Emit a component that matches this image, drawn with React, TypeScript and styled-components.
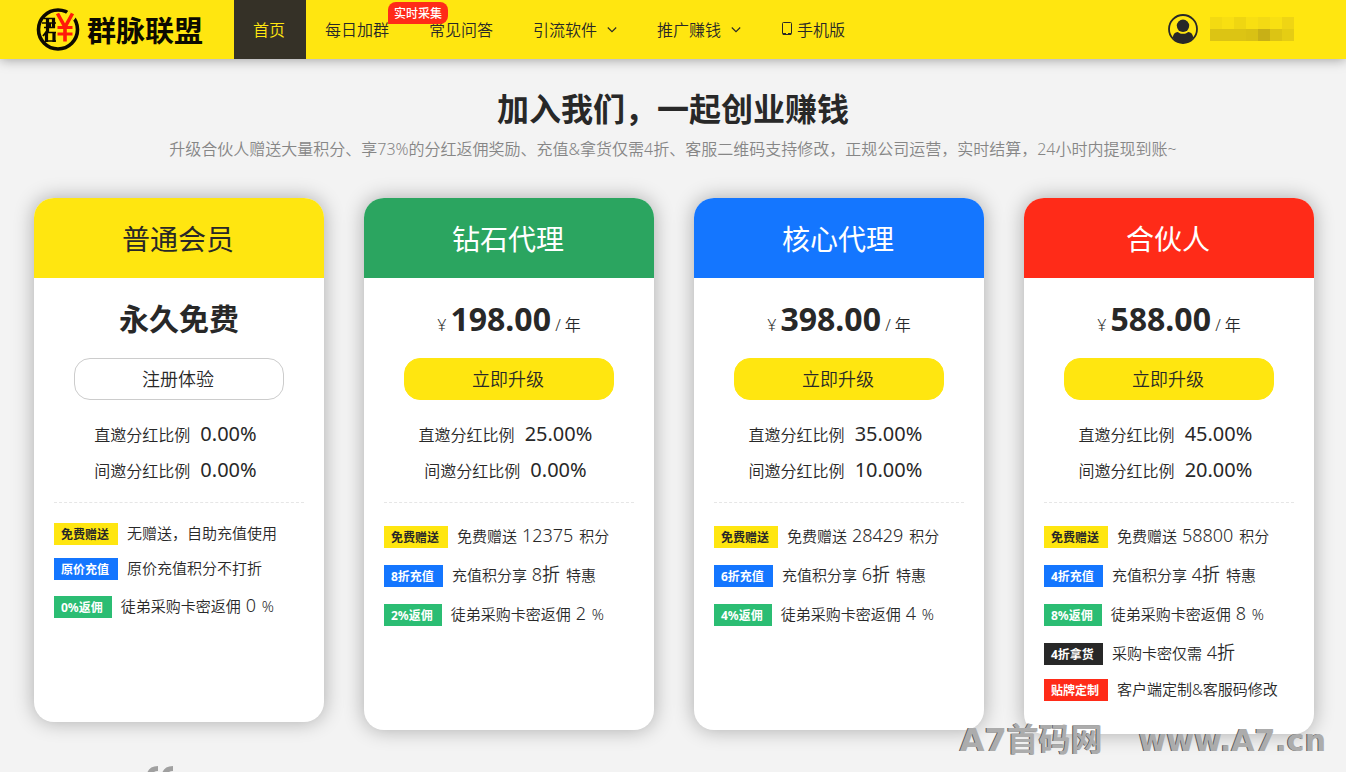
import React from "react";
import styled, { createGlobalStyle } from "styled-components";

const YELLOW = "#ffe610";
const INK = "#282828";

const GlobalStyle = createGlobalStyle`
  * { box-sizing: border-box; }
  body {
    margin: 0;
    background: #f3f3f3;
    color: ${INK};
    font-family: "Noto Sans", "Noto Sans CJK SC", sans-serif;
    font-size: 16px;
    font-weight: 350;
  }
  h1, h2, p, ul { margin: 0; padding: 0; }
  ul { list-style: none; }
  a { color: inherit; text-decoration: none; }
  button { font: inherit; color: inherit; cursor: pointer; }
`;

const Page = styled.div`
  position: relative;
  height: 100vh;
  overflow: hidden;
`;

const TopBar = styled.header`
  position: relative;
  display: flex;
  align-items: center;
  height: 59px;
  padding: 0 52px 0 36px;
  background: ${YELLOW};
  box-shadow: 0 0 12px rgba(0, 0, 0, 0.4);
`;

const Logo = styled.a`
  display: flex;
  align-items: center;
  gap: 7px;
  width: 198px;
  height: 59px;
  padding-bottom: 2px;
  color: #0c0a00;
  font-size: 29px;
  font-weight: 700;
  white-space: nowrap;
`;

const Nav = styled.nav`
  display: flex;
  flex: 1;
`;

const NavItem = styled.a<{ $active?: boolean }>`
  position: relative;
  display: flex;
  align-items: center;
  height: 59px;
  padding: 0 21px 2px 19px;
  white-space: nowrap;
  color: ${(p) => (p.$active ? YELLOW : INK)};
  background: ${(p) => (p.$active ? "#353127" : "transparent")};
`;

const Chevron = styled.svg`
  margin-left: 10px;
`;

const PhoneGlyph = styled.svg`
  margin: 0 5px 0 1px;
`;

const NavBadge = styled.span`
  position: absolute;
  z-index: 1;
  top: 2px;
  left: 82px;
  height: 22px;
  padding: 0 6px;
  border-radius: 8px 8px 8px 0;
  background: #ff2b18;
  color: #fff;
  font-size: 12px;
  font-weight: 500;
  line-height: 24px;
`;

const Account = styled.a`
  display: flex;
  align-items: center;
  gap: 12px;
  padding-bottom: 2px;
`;

const MaskedName = styled.span`
  display: grid;
  grid-template-columns: repeat(7, 12px);
  grid-auto-rows: 12px;
`;

const MaskCell = styled.i<{ $tone: string }>`
  background: ${(p) => p.$tone};
`;

const Intro = styled.section`
  padding: 26px 16px 0;
  text-align: center;
`;

const Title = styled.h1`
  font-size: 32px;
  font-weight: 700;
  line-height: 48px;
`;

const Subtitle = styled.p`
  color: #868686;
  line-height: 32px;
`;

const Plans = styled.main`
  display: grid;
  grid-template-columns: repeat(4, 1fr);
  gap: 40px;
  align-items: start;
  max-width: 1346px;
  margin: 0 auto;
  padding: 33px 32px 0 34px;
`;

const Card = styled.article`
  overflow: hidden;
  border-radius: 20px;
  background: #fff;
  box-shadow: 0 0 20px rgba(0, 0, 0, 0.3);
`;

const CardHead = styled.h2<{ $bg: string; $dark?: boolean }>`
  height: 80px;
  padding-right: 2px;
  background: ${(p) => p.$bg};
  color: ${(p) => (p.$dark ? INK : "#fff")};
  font-size: 28px;
  font-weight: 400;
  line-height: 82px;
  text-align: center;
`;

const CardBody = styled.div`
  padding: 0 20px 20px;
`;

const Price = styled.p`
  height: 80px;
  line-height: 82px;
  text-align: center;
  white-space: nowrap;
`;

const Amount = styled.strong<{ $words?: boolean }>`
  font-size: ${(p) => (p.$words ? 30 : 32)}px;
  font-weight: 700;
`;

const PlanButton = styled.button<{ $outline?: boolean }>`
  display: block;
  width: calc(100% - 40px);
  height: 42px;
  margin: 0 auto;
  padding: 0 2px 2px 0;
  border: 1px solid ${(p) => (p.$outline ? "#cccccc" : YELLOW)};
  border-radius: 16px;
  background: ${(p) => (p.$outline ? "#fff" : YELLOW)};
  font-size: 18px;
`;

const Ratios = styled.div`
  padding: 16px 0 14px;
  border-bottom: 1px dashed #e6e6e6;
  text-align: center;
`;

const Ratio = styled.p`
  height: 36px;
  line-height: 36px;
  white-space: nowrap;
`;

const RatioValue = styled.span`
  margin: 0 7px 0 10px;
  font-size: 20px;
  font-weight: 400;
`;

const Perks = styled.ul`
  padding-top: 20px;
`;

const Perk = styled.li<{ $tall?: boolean }>`
  display: flex;
  align-items: flex-start;
  height: ${(p) => (p.$tall ? 39 : 35)}px;
  padding-top: ${(p) => (p.$tall ? 3 : 0)}px;
  font-size: 15px;
  line-height: ${(p) => (p.$tall ? 18 : 20)}px;
  white-space: nowrap;
`;

const Tag = styled.span<{ $bg: string; $dark?: boolean }>`
  height: 22px;
  margin-right: 9px;
  padding: 0 9px 0 7px;
  background: ${(p) => p.$bg};
  color: ${(p) => (p.$dark ? INK : "#fff")};
  font-size: 12px;
  font-weight: 700;
  line-height: 24px;
`;

const Big = styled.span`
  margin: 0 2px 0 1px;
  font-size: 18px;
`;

const Quote = styled.section`
  padding: 32px 146px 0;
`;

const Watermark = styled.div`
  position: absolute;
  right: 20px;
  bottom: 11px;
  display: flex;
  align-items: baseline;
  gap: 36px;
  color: #acacac;
  font-family: "DejaVu Sans", "Noto Sans CJK SC", sans-serif;
  font-size: 32px;
  font-weight: 700;
  line-height: 40px;
  text-shadow: -1px 0 0 #5a5a5a;
  white-space: nowrap;
`;

const WatermarkUrl = styled.span`
  font-size: 30px;
`;

type PerkData = { tag: string; tone: string; dark?: boolean; text: string; big?: string; tail?: string };
type Plan = {
  name: string;
  bg: string;
  dark?: boolean;
  price?: string;
  direct: string;
  indirect: string;
  perks: PerkData[];
};

const BLUE = "#1476ff";
const GREEN = "#2bbd73";
const RED = "#ff2b18";

const gift = (points: string): PerkData => ({ tag: "免费赠送", tone: YELLOW, dark: true, text: "免费赠送", big: points, tail: "积分" });
const discount = (rate: string): PerkData => ({ tag: `${rate}充值`, tone: BLUE, text: "充值积分享", big: rate, tail: "特惠" });
const rebate = (n: string): PerkData => ({ tag: `${n}%返佣`, tone: GREEN, text: "徒弟采购卡密返佣", big: n, tail: "%" });

const plans: Plan[] = [
  {
    name: "普通会员", bg: YELLOW, dark: true, direct: "0.00%", indirect: "0.00%",
    perks: [
      { tag: "免费赠送", tone: YELLOW, dark: true, text: "无赠送，自助充值使用" },
      { tag: "原价充值", tone: BLUE, text: "原价充值积分不打折" },
      rebate("0"),
    ],
  },
  { name: "钻石代理", bg: "#2ba560", price: "198.00", direct: "25.00%", indirect: "0.00%", perks: [gift("12375"), discount("8折"), rebate("2")] },
  { name: "核心代理", bg: BLUE, price: "398.00", direct: "35.00%", indirect: "10.00%", perks: [gift("28429"), discount("6折"), rebate("4")] },
  {
    name: "合伙人", bg: RED, price: "588.00", direct: "45.00%", indirect: "20.00%",
    perks: [
      gift("58800"), discount("4折"), rebate("8"),
      { tag: "4折拿货", tone: INK, text: "采购卡密仅需", big: "4折" },
      { tag: "贴牌定制", tone: RED, text: "客户端定制&客服码修改" },
    ],
  },
];

const PERK_SLOTS = 5;

const maskTones = [
  "#f3da12", "#f8df12", "#efd612", "#f8df12", "#f3da14", "#f8e012", "#efd514",
  "#dcc414", "#dcc414", "#dcc414", "#d9c114", "#c8b016", "#dcc414", "#e5cd14",
];

const Arrow = () => (
  <Chevron width="10" height="10" viewBox="0 0 10 10" fill="none" stroke={INK} strokeWidth="1.1" aria-hidden="true">
    <path d="M0.8 3.5l4.2 4.2L9.2 3.5" />
  </Chevron>
);

const LogoMark = () => (
  <svg width="44" height="44" viewBox="0 0 44 44" fill="none" aria-hidden="true">
    <circle cx="22" cy="22.5" r="19.5" stroke="#0c0a00" strokeWidth="3.6" />
    <path stroke={YELLOW} strokeWidth="5" d="M31 5.5l8 6" />
    <g stroke="#0c0a00">
      <path strokeWidth="1.6" d="M8 11.5h11M6 16h14M8 20.5h11M9 25.5h11M9 34h11" />
      <path strokeWidth="3.2" d="M17.5 11v10M11.5 11v14M10.5 25v10M18 25v10" />
      <path strokeWidth="2" d="M11 24l-4 5M14 16v5" />
    </g>
    <g stroke="#ff1a0a">
      <path strokeWidth="3.6" d="M21.5 6.5l7.5 13.5L36.5 6.5M29 19v15.5" />
      <path strokeWidth="2.8" d="M21.5 20.5h15M21.5 27h15" />
    </g>
  </svg>
);

export default function App() {
  return (
    <Page>
      <GlobalStyle />
      <TopBar>
        <Logo href="#">
          <LogoMark />
          群脉联盟
        </Logo>
        <Nav>
          <NavItem href="#" $active>首页</NavItem>
          <NavItem href="#">
            每日加群
            <NavBadge>实时采集</NavBadge>
          </NavItem>
          <NavItem href="#">常见问答</NavItem>
          <NavItem href="#">引流软件<Arrow /></NavItem>
          <NavItem href="#">推广赚钱<Arrow /></NavItem>
          <NavItem href="#">
            <PhoneGlyph width="10" height="14" viewBox="0 0 10 14" fill="none" stroke={INK} aria-hidden="true">
              <rect x="0.5" y="0.5" width="9" height="12" rx="1" />
              <path strokeWidth="2" d="M1 12h3M6 12h3" />
            </PhoneGlyph>
            手机版
          </NavItem>
        </Nav>
        <Account href="#" aria-label="account">
          <svg width="30" height="30" viewBox="0 0 30 30" aria-hidden="true">
            <circle cx="15" cy="15" r="14" fill="none" stroke={INK} strokeWidth="1.8" />
            <circle cx="15" cy="11.8" r="6.2" fill={INK} />
            <path fill={INK} d="M4.8 23.5c.4-3.6 2-5.3 5-5.5 1.5 1.3 3.2 1.8 5.2 1.8s3.7-.5 5.2-1.8c3 .2 4.6 1.9 5 5.5-2.5 3.6-6 5.7-10.2 5.7s-7.7-2.1-10.2-5.7z" />
          </svg>
          <MaskedName>
            {maskTones.map((tone, i) => <MaskCell key={i} $tone={tone} />)}
          </MaskedName>
        </Account>
      </TopBar>

      <Intro>
        <Title>加入我们，一起创业赚钱</Title>
        <Subtitle>升级合伙人赠送大量积分、享73%的分红返佣奖励、充值&amp;拿货仅需4折、客服二维码支持修改，正规公司运营，实时结算，24小时内提现到账~</Subtitle>
      </Intro>

      <Plans>
        {plans.map((plan) => (
          <Card key={plan.name}>
            <CardHead $bg={plan.bg} $dark={plan.dark}>{plan.name}</CardHead>
            <CardBody>
              <Price>
                {plan.price ? <>¥ <Amount>{plan.price}</Amount> / 年</> : <Amount $words>永久免费</Amount>}
              </Price>
              <PlanButton type="button" $outline={!plan.price}>{plan.price ? "立即升级" : "注册体验"}</PlanButton>
              <Ratios>
                <Ratio>直邀分红比例<RatioValue>{plan.direct}</RatioValue></Ratio>
                <Ratio>间邀分红比例<RatioValue>{plan.indirect}</RatioValue></Ratio>
              </Ratios>
              <Perks>
                {plan.perks.map((perk) => (
                  <Perk key={perk.tag} $tall={!!perk.big}>
                    <Tag $bg={perk.tone} $dark={perk.dark}>{perk.tag}</Tag>
                    <span>{perk.text}{perk.big && <> <Big>{perk.big}</Big> </>}{perk.tail}</span>
                  </Perk>
                ))}
                {Array.from({ length: PERK_SLOTS - plan.perks.length }, (_, i) => <Perk key={i} aria-hidden="true" />)}
              </Perks>
            </CardBody>
          </Card>
        ))}
      </Plans>

      <Quote>
        <svg width="28" height="24" viewBox="0 0 28 24" fill="none" stroke="#a0a0a0" strokeWidth="5" aria-hidden="true">
          <path d="M12 2.5C6 2.5 3 6 3 12v8M27 2.5c-6 0-9 3.5-9 9.5v8" />
        </svg>
      </Quote>

      <Watermark>
        <span>A7首码网</span>
        <WatermarkUrl>www.A7.cn</WatermarkUrl>
      </Watermark>
    </Page>
  );
}
